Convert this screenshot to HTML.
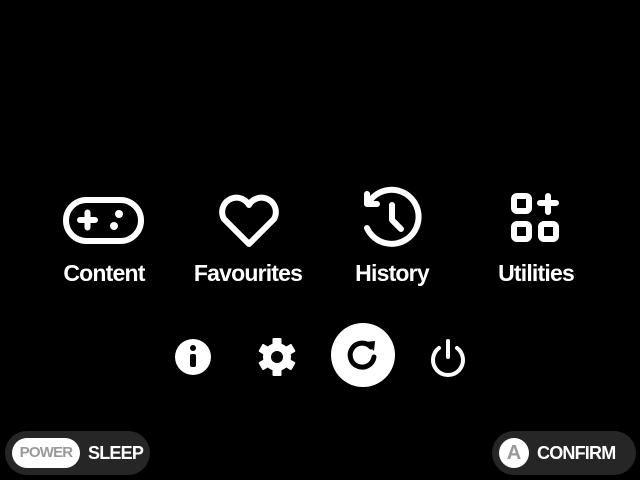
<!DOCTYPE html>
<html><head><style>
body{margin:0;width:640px;height:480px;background:#000;position:relative;overflow:hidden;font-family:"Liberation Sans",sans-serif;color:#fff}
.lbl{position:absolute;top:260px;font-size:23px;font-weight:bold;transform:translateX(-50%);letter-spacing:-0.8px;white-space:nowrap}
svg{position:absolute}
.pill{position:absolute;top:431px;height:44px;background:#262626;border-radius:22px}
</style></head><body>
<svg style="left:0;top:0" width="640" height="480">
<g fill="none" stroke="#fff" stroke-width="6" stroke-linecap="round" stroke-linejoin="round">
<rect x="66" y="200" width="75" height="41" rx="20.5"/>
<path d="M80 220h15M87.5 212.5v15"/>
<path d="M249 244L224 219a14 14 0 0 1 25-14a14 14 0 0 1 25 14z"/>
<path d="M369 202a27 27 0 1 1 -2 26"/>
<path d="M367 194v10h10"/>
<path d="M392 205v15l9 9"/>
<rect x="514" y="196" width="15" height="15" rx="3"/>
<rect x="514" y="224" width="15" height="15" rx="3"/>
<rect x="541" y="224" width="15" height="15" rx="3"/>
<path d="M548 196v16M540 203h16"/>
</g>
<circle cx="119" cy="214" r="4" fill="#fff"/>
<circle cx="114" cy="226" r="4" fill="#fff"/>
<circle cx="193" cy="357" r="18" fill="#fff"/>
<circle cx="193" cy="348" r="3" fill="#000"/>
<rect x="190" y="354" width="6" height="13" rx="2" fill="#000"/>
<g transform="translate(277,357)" fill="#fff">
<circle r="14"/>
<g><rect x="-4.5" y="-19" width="9" height="8" rx="1"/><rect x="-4.5" y="-19" width="9" height="8" rx="1" transform="rotate(60)"/><rect x="-4.5" y="-19" width="9" height="8" rx="1" transform="rotate(120)"/><rect x="-4.5" y="-19" width="9" height="8" rx="1" transform="rotate(180)"/><rect x="-4.5" y="-19" width="9" height="8" rx="1" transform="rotate(240)"/><rect x="-4.5" y="-19" width="9" height="8" rx="1" transform="rotate(300)"/></g>
<circle r="6" fill="#000"/>
</g>
<circle cx="363" cy="355" r="32" fill="#fff"/>
<path d="M371 347a12 12 0 1 0 3 10" fill="none" stroke="#000" stroke-width="5" stroke-linecap="round"/>
<path d="M365 342l10 -1l-1 10z" fill="#000"/>
<g fill="none" stroke="#fff" stroke-width="4" stroke-linecap="round">
<path d="M439 348a15 15 0 1 0 18 0"/><path d="M448 341v16"/>
</g>
</svg>
<div class="lbl" style="left:104px">Content</div>
<div class="lbl" style="left:248px">Favourites</div>
<div class="lbl" style="left:392px">History</div>
<div class="lbl" style="left:536px">Utilities</div>
<div class="pill" style="left:5px;width:145px">
<div style="position:absolute;left:7px;top:7px;width:68px;height:30px;background:#fff;border-radius:15px;color:#999;font-size:15px;font-weight:bold;line-height:30px;text-align:center;letter-spacing:-0.8px">POWER</div>
<div style="position:absolute;left:83px;top:0;line-height:44px;font-size:18px;font-weight:bold;letter-spacing:-0.8px">SLEEP</div>
</div>
<div class="pill" style="left:492px;width:144px">
<div style="position:absolute;left:7px;top:7px;width:30px;height:30px;background:#fff;border-radius:15px;color:#999;font-size:20px;font-weight:bold;line-height:30px;text-align:center">A</div>
<div style="position:absolute;left:45px;top:0;line-height:44px;font-size:18px;font-weight:bold;letter-spacing:-0.8px">CONFIRM</div>
</div>
</body></html>
